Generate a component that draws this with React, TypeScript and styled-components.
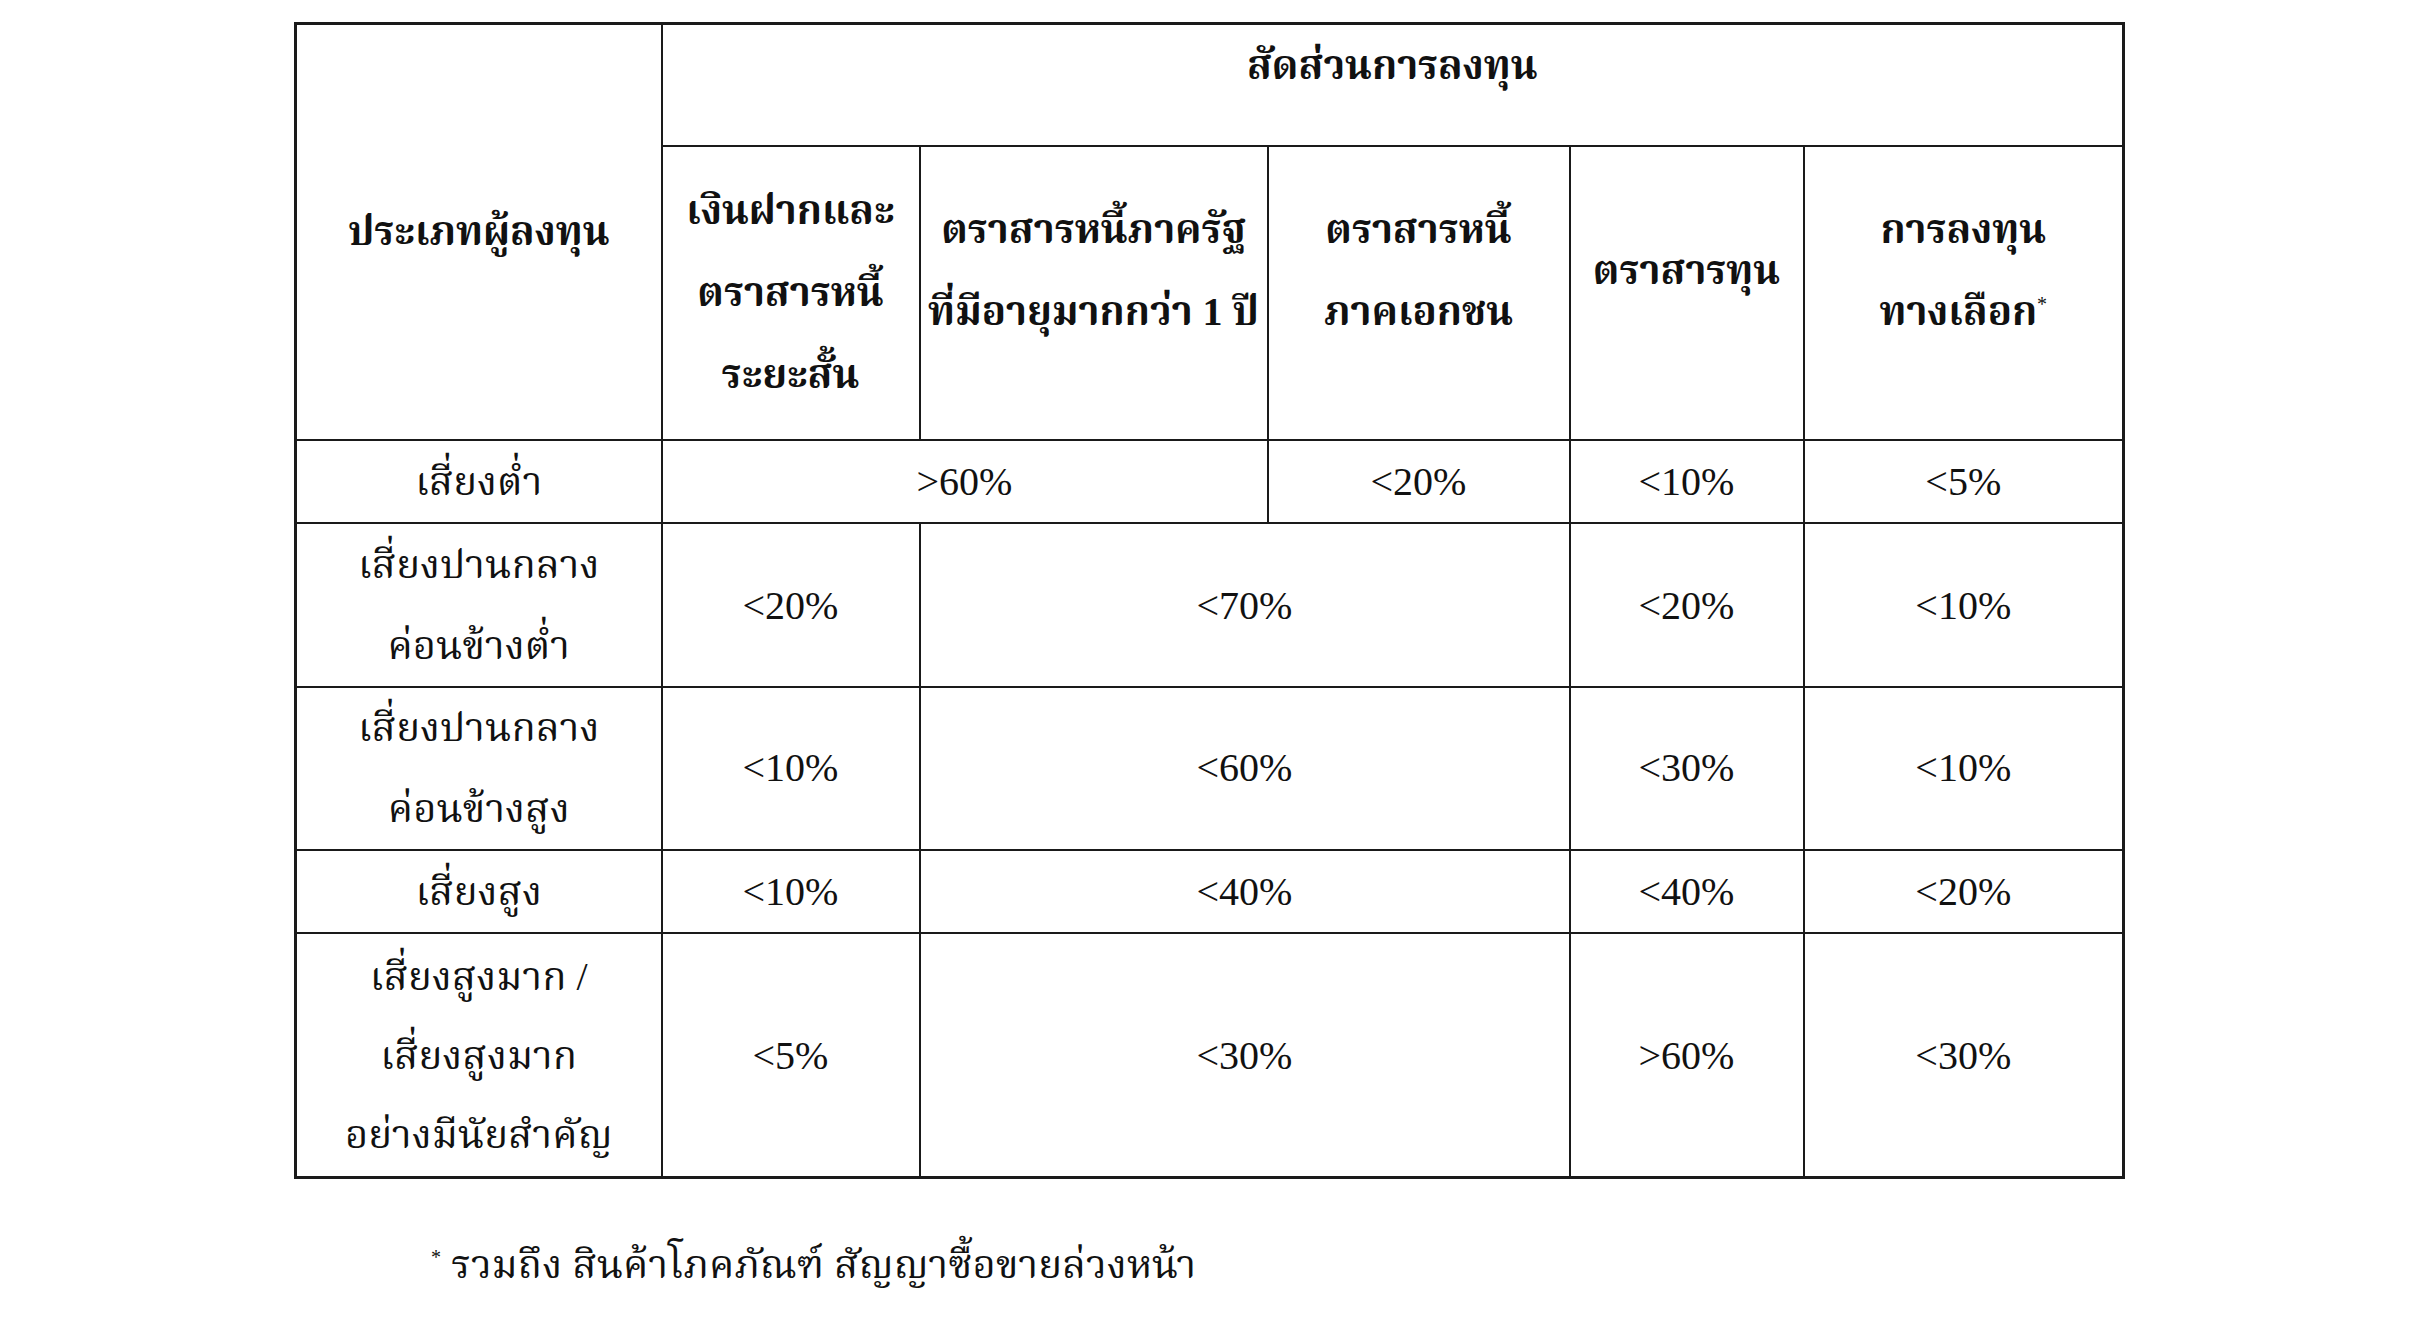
import * as React from "react";
import styled, { createGlobalStyle } from "styled-components";

const GlobalStyle = createGlobalStyle`
  html, body {
    margin: 0;
    padding: 0;
    background: #ffffff;
  }
  body {
    font-family: "Liberation Serif", "Noto Serif Thai", "Noto Sans Thai", "Loma", "Garuda", serif;
    color: #111;
  }
`;

const Page = styled.div`
  width: 2436px;
  min-height: 1336px;
  padding: 22px 0 0 294px;
  box-sizing: border-box;
`;

const Table = styled.table`
  border-collapse: collapse;
  table-layout: fixed;
  width: 1828px;
  border: 3px solid #1a1a1a;
`;

const Cell = styled.td<{ $h?: number; $lh?: number; $lift?: number }>`
  border: 2px solid #1a1a1a;
  text-align: center;
  vertical-align: middle;
  padding: 0 4px ${(p) => (p.$lift ? `${p.$lift}px` : "0")};
  font-size: 40px;
  line-height: ${(p) => p.$lh ?? 82}px;
  height: ${(p) => (p.$h ? `${p.$h}px` : "auto")};
  white-space: nowrap;
`;

const HeadCell = styled(Cell).attrs({ as: "th" })`
  font-weight: bold;
`;

const Sup = styled.sup`
  font-size: 20px;
  line-height: 0;
  vertical-align: 14px;
  font-weight: normal;
`;

const Footnote = styled.p`
  margin: 56px 0 0 137px;
  font-size: 40px;
  line-height: 60px;
`;

const colWidths = [366, 258, 348, 302, 234, 320];

type Row = {
  label: string[];
  h: number;
  lh: number;
  cells: { v: string; span?: number }[];
};

const rows: Row[] = [
  {
    label: ["เสี่ยงต่ำ"],
    h: 79,
    lh: 81,
    cells: [{ v: ">60%", span: 2 }, { v: "<20%" }, { v: "<10%" }, { v: "<5%" }],
  },
  {
    label: ["เสี่ยงปานกลาง", "ค่อนข้างต่ำ"],
    h: 162,
    lh: 81,
    cells: [{ v: "<20%" }, { v: "<70%", span: 2 }, { v: "<20%" }, { v: "<10%" }],
  },
  {
    label: ["เสี่ยงปานกลาง", "ค่อนข้างสูง"],
    h: 161,
    lh: 80.5,
    cells: [{ v: "<10%" }, { v: "<60%", span: 2 }, { v: "<30%" }, { v: "<10%" }],
  },
  {
    label: ["เสี่ยงสูง"],
    h: 79,
    lh: 81,
    cells: [{ v: "<10%" }, { v: "<40%", span: 2 }, { v: "<40%" }, { v: "<20%" }],
  },
  {
    label: ["เสี่ยงสูงมาก /", "เสี่ยงสูงมาก", "อย่างมีนัยสำคัญ"],
    h: 242,
    lh: 79,
    cells: [{ v: "<5%" }, { v: "<30%", span: 2 }, { v: ">60%" }, { v: "<30%" }],
  },
];

const Lines = ({ lines }: { lines: string[] }) => (
  <>
    {lines.map((l, i) => (
      <React.Fragment key={i}>
        {i > 0 && <br />}
        {l}
      </React.Fragment>
    ))}
  </>
);

export default function App() {
  return (
    <>
      <GlobalStyle />
      <Page>
        <Table>
          <colgroup>
            {colWidths.map((w, i) => (
              <col key={i} style={{ width: w }} />
            ))}
          </colgroup>
          <thead>
            <tr>
              <HeadCell rowSpan={2}>ประเภทผู้ลงทุน</HeadCell>
              <HeadCell colSpan={5} $h={82} $lift={38}>
                สัดส่วนการลงทุน
              </HeadCell>
            </tr>
            <tr>
              <HeadCell $h={292}>
                <Lines lines={["เงินฝากและ", "ตราสารหนี้", "ระยะสั้น"]} />
              </HeadCell>
              <HeadCell $lift={44}>
                <Lines lines={["ตราสารหนี้ภาครัฐ", "ที่มีอายุมากกว่า 1 ปี"]} />
              </HeadCell>
              <HeadCell $lift={44}>
                <Lines lines={["ตราสารหนี้", "ภาคเอกชน"]} />
              </HeadCell>
              <HeadCell $lift={44}>ตราสารทุน</HeadCell>
              <HeadCell $lift={44}>
                การลงทุน
                <br />
                ทางเลือก<Sup>*</Sup>
              </HeadCell>
            </tr>
          </thead>
          <tbody>
            {rows.map((r, i) => (
              <tr key={i}>
                <Cell $h={r.h} $lh={r.lh}>
                  <Lines lines={r.label} />
                </Cell>
                {r.cells.map((c, j) => (
                  <Cell key={j} colSpan={c.span} $lh={r.lh}>
                    {c.v}
                  </Cell>
                ))}
              </tr>
            ))}
          </tbody>
        </Table>
        <Footnote>
          <Sup>*</Sup> รวมถึง สินค้าโภคภัณฑ์ สัญญาซื้อขายล่วงหน้า
        </Footnote>
      </Page>
    </>
  );
}
